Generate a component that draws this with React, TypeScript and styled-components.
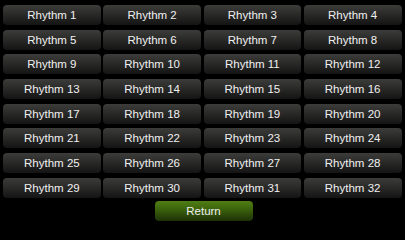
import * as React from "react"
import styled, { createGlobalStyle } from 'styled-components'

const GlobalStyle = createGlobalStyle`
  html, body {
    margin: 0;
    padding: 0;
    background: #000;
  }
  body {
    font-family: "Liberation Sans", Arial, sans-serif;
  }
`

const Screen = styled('div')`
  width: 405px;
  height: 228px;
  background: #000;
  display: flex;
  flex-direction: column;
  align-items: center;
  padding-top: 5px;
  box-sizing: border-box;
  overflow: hidden;
`

const RhythmGrid = styled('div')`
  width: 100%;
  box-sizing: border-box;
  padding: 0 3.5px 0 3px;
  display: grid;
  grid-template-columns: repeat(4, 1fr);
  grid-auto-rows: 20px;
  column-gap: 2.5px;
  row-gap: 4.7px;
`

const PadButton = styled('button')<{ $green?: boolean }>`
  border: none;
  margin: 0;
  padding: 0;
  height: 20px;
  border-radius: 4px;
  font-family: "Liberation Sans", Arial, sans-serif;
  font-size: 11.5px;
  color: #f0f0f0;
  display: flex;
  align-items: center;
  justify-content: center;
  background: ${p => p.$green
    ? 'linear-gradient(to bottom, #4f7e14 0%, #3a610c 45%, #1d3006 100%)'
    : 'linear-gradient(to bottom, #3c3c3a 0%, #2a2a29 45%, #141414 100%)'};
`

const ReturnButton = styled(PadButton)`
  width: 98px;
  margin-top: 3px;
  margin-left: 2px;
`

const rhythms = Array.from({ length: 32 }, (_, i) => `Rhythm ${i + 1}`)

const App: React.FC = () => {
  return (
    <>
      <GlobalStyle />
      <Screen>
        <RhythmGrid>
          {rhythms.map(name => (
            <PadButton key={name}>{name}</PadButton>
          ))}
        </RhythmGrid>
        <ReturnButton $green>Return</ReturnButton>
      </Screen>
    </>
  )
}

export default App
